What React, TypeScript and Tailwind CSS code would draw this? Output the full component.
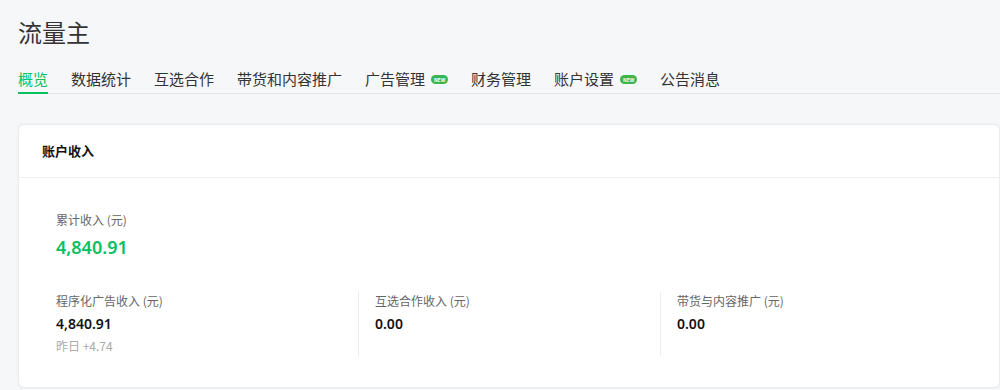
import React from "react";

const FONT = '"Noto Sans CJK SC", "Noto Sans", sans-serif';
const NUM = '"Noto Sans", "Noto Sans CJK SC", sans-serif';

function NewBadge() {
  return (
    <span className="ml-[6px] inline-flex h-[9px] w-[17px] items-center justify-center rounded-full bg-[#3cb54a] text-[5px] font-bold leading-none text-white">
      NEW
    </span>
  );
}

const tabs: { label: string; badge?: boolean; active?: boolean }[] = [
  { label: "概览", active: true },
  { label: "数据统计" },
  { label: "互选合作" },
  { label: "带货和内容推广" },
  { label: "广告管理", badge: true },
  { label: "财务管理" },
  { label: "账户设置", badge: true },
  { label: "公告消息" },
];

function Stat({
  label,
  value,
  sub,
  first,
}: {
  label: string;
  value: string;
  sub?: string;
  first?: boolean;
}) {
  return (
    <div className={first ? "h-[64px]" : "h-[64px] border-l border-[#ececec] pl-4"}>
      <div className="text-[12px] leading-[17px] text-[#666]">{label}</div>
      <div className="mt-[6px] text-[14px] font-semibold leading-[18px] text-[#111]" style={{ fontFamily: NUM }}>
        {value}
      </div>
      {sub && <div className="mt-[5px] text-[12px] leading-[16px] text-[#aaa]">{sub}</div>}
    </div>
  );
}

export default function App() {
  return (
    <div className="h-[390px] w-[1000px] overflow-hidden bg-[#f6f7f9]" style={{ fontFamily: FONT }}>
      <div className="pl-[18px] pt-[16px]">
        <h1 className="text-[24px] leading-[32px] text-[#333]">流量主</h1>
        <div className="mt-[20px] flex h-[26px] items-start gap-[23px] border-b border-[#e3e4e6]">
          {tabs.map((t) => (
            <div
              key={t.label}
              className={
                t.active
                  ? "flex h-[26px] items-start border-b-2 border-[#07c160] text-[15px] leading-[22px] text-[#07c160]"
                  : "flex h-[26px] items-start text-[15px] leading-[22px] text-[#333]"
              }
            >
              <span>{t.label}</span>
              {t.badge && (
                <span className="flex h-[22px] items-center">
                  <NewBadge />
                </span>
              )}
            </div>
          ))}
        </div>
      </div>

      <div className="ml-[18px] mt-[30px] h-[264px] w-[982px] rounded-[6px] border border-[#ececec] bg-white shadow-[0_0_2px_rgba(0,0,0,0.08)]">
        <div className="flex h-[53px] items-center border-b border-[#eeeeee] pl-[23px] text-[13px] font-bold text-[#111]">
          账户收入
        </div>
        <div className="px-[37px] pt-[33px]">
          <div className="text-[12px] leading-[17px] text-[#666]">累计收入 (元)</div>
          <div className="mt-[8px] text-[18px] font-semibold leading-[22px] text-[#07c160]" style={{ fontFamily: NUM }}>
            4,840.91
          </div>
          <div className="mt-[34px] grid grid-cols-[302px_302px_302px]">
            <Stat first label="程序化广告收入 (元)" value="4,840.91" sub="昨日 +4.74" />
            <Stat label="互选合作收入 (元)" value="0.00" />
            <Stat label="带货与内容推广 (元)" value="0.00" />
          </div>
        </div>
      </div>
    </div>
  );
}
